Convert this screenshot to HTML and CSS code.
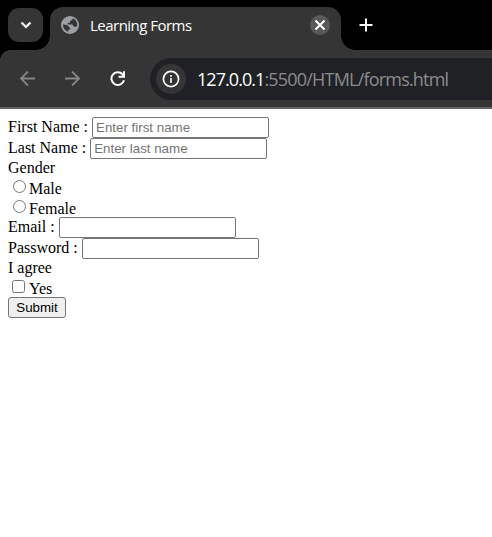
FILE: index.html
```html
<!DOCTYPE html>
<html lang="en">
<head>
<meta charset="utf-8">
<title>Learning Forms</title>
<link rel="stylesheet" href="styles.css">
</head>
<body>
<header class="browser">
  <div class="tabstrip">
    <div class="tab-search">
      <svg width="12" height="8" viewBox="0 0 12 8"><path d="M1.500 1.500 6 6l4.500-4.500" fill="none" stroke="#fff" stroke-width="2.200"/></svg>
    </div>
    <div class="tab">
      <svg class="globe" width="18" height="18" viewBox="0 0 18 18"><circle cx="9" cy="9" r="9" fill="#9aa0a6"/><path d="M12 2.300C11.500 4.500 9.500 4.200 9 5.200V6.700H6.800V8.600H11C12 8.600 12 10.800 13.200 10.800H15.900A7 7 0 0 0 12 2.300ZM2.100 8.200 6.500 9.300C8 9.800 7.300 11.700 9.200 11.700V13.500H7.300V15.800A7 7 0 0 1 2.100 8.200Z" fill="#353535"/></svg>
      <span class="tab-title">Learning Forms</span>
      <span class="tab-close"><svg width="12" height="12" viewBox="0 0 12 12"><path d="M1.500 1.500l9 9m0-9-9 9" stroke="#fff" stroke-width="2"/></svg></span>
    </div>
    <svg class="new-tab" width="14" height="14" viewBox="0 0 14 14"><path d="M7 .5v13M.5 7h13" stroke="#fff" stroke-width="2"/></svg>
  </div>
  <div class="toolbar">
    <svg class="nav" width="16" height="16" viewBox="0 0 16 16"><path d="M15 7.500H2M8 .5 1 7.500l7 7" fill="none" stroke="#858585" stroke-width="1.800"/></svg>
    <svg class="nav" width="16" height="16" viewBox="0 0 16 16"><path d="M0 7.500H13.500M7 .5l7 7-7 7" fill="none" stroke="#858585" stroke-width="1.800"/></svg>
    <svg class="nav" width="16" height="16" viewBox="0 0 16 16"><path d="M14 9.300A6.400 6.400 0 1 1 12.500 3.200L14 5M14 .3V5.800H8.500" fill="none" stroke="#fff" stroke-width="2"/></svg>
    <div class="address">
      <span class="site-info"><svg width="18" height="18" viewBox="0 0 18 18"><circle cx="9" cy="9" r="7.600" fill="none" stroke="#fff" stroke-width="1.700"/><path d="M9 8v5M9 5v1.800" stroke="#e8e8e8" stroke-width="1.800"/></svg></span>
      <span class="host">127.0.0.1</span><span class="path">:5500/HTML/forms.html</span>
    </div>
  </div>
</header>
<form class="page">
  <label class="row field">First Name :&nbsp;<input type="text" placeholder="Enter first name"></label>
  <label class="row field">Last Name :&nbsp;<input type="text" placeholder="Enter last name"></label>
  <div class="row">Gender</div>
  <label class="row tall"><input class="radio" type="radio" name="gender">Male</label>
  <label class="row option"><input class="radio" type="radio" name="gender">Female</label>
  <label class="row field">Email :&nbsp;<input type="email"></label>
  <label class="row field">Password :&nbsp;<input type="password"></label>
  <div class="row">I agree</div>
  <label class="row option"><input class="check" type="checkbox">Yes</label>
  <button class="submit" type="button">Submit</button>
</form>
</body>
</html>
```
FILE: styles.css
```css
* { box-sizing: border-box; }
body { margin: 0; background: #fff; color: #000; font: 16px "Liberation Serif", serif; overflow: hidden; }
svg { display: block; flex: none; }

.browser { height: 109px; background: #353535; border-bottom: 2px solid #656262; font-family: "Open Sans", sans-serif; color: #fff; }
.tabstrip { height: 50px; background: #000; display: flex; padding: 7px 0 0 8px; }
.tab-search { width: 35px; height: 34px; margin-top: 1px; border-radius: 11px; background: #353535; display: flex; align-items: center; justify-content: center; }
.tab { position: relative; width: 291px; height: 43px; margin-left: 7px; padding: 0 11px 7px 11px; border-radius: 13px 13px 0 0; background: #353535; display: flex; align-items: center; }
.tab::before, .tab::after { content: ""; position: absolute; bottom: 0; width: 14px; height: 14px; }
.tab::before { left: -14px; background: radial-gradient(circle at 0 0, transparent 13.5px, #353535 14px); }
.tab::after { right: -14px; background: radial-gradient(circle at 100% 0, transparent 13.5px, #353535 14px); }
.tab-title { margin-left: 11px; font-size: 15px; letter-spacing: -0.52px; white-space: nowrap; }
.tab-close { width: 20px; height: 20px; margin-left: auto; border-radius: 50%; background: #595959; display: flex; align-items: center; justify-content: center; }
.new-tab { margin: 11px 0 0 18px; }

.toolbar { position: relative; height: 57px; display: flex; align-items: center; padding-left: 20px; }
.toolbar::before { content: ""; position: absolute; left: 0; top: 0; width: 10px; height: 10px; background: radial-gradient(circle at 100% 100%, transparent 9.5px, #000 10px); }
.nav { margin-right: 29px; }
.address { flex: 1; height: 42px; margin: 1px 0 0 -5px; padding-left: 6px; border-radius: 21px 0 0 21px; background: #202124; display: flex; align-items: center; font-size: 18px; white-space: nowrap; }
.site-info { width: 30px; height: 30px; margin-right: 11px; border-radius: 50%; background: #353535; display: flex; align-items: center; justify-content: center; }
.host { letter-spacing: -0.95px; }
.path { color: #8b8c8e; letter-spacing: -0.8px; }

.page { padding: 8px; }
.row { display: flex; height: 19px; line-height: 18px; }
.field { height: 21px; line-height: 20px; }
.option { line-height: 22px; }
.tall { height: 20px; line-height: 22px; }
.field input { width: 177px; height: 21px; margin: 0; padding: 1px 3px; border: 1px solid #767676; border-radius: 2px; background: #fff; font: 13.333px "Liberation Sans", sans-serif; }
.field input::placeholder { color: #757575; }
.radio { width: 13px; height: 13px; margin: 2px 3px 0 5px; }
.check { width: 13px; height: 13px; margin: 2px 4px 0 4px; }
.submit { display: block; width: 58px; height: 21px; padding: 0; border: 1px solid #767676; border-radius: 3px; background: #efefef; color: #000; font: 13.333px "Liberation Sans", sans-serif; }
```
